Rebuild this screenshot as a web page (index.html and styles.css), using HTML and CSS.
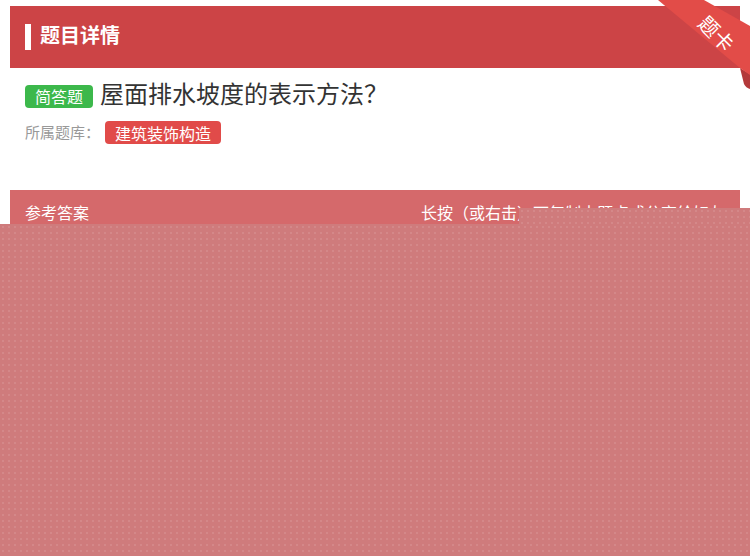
FILE: index.html
```html
<!DOCTYPE html>
<html lang="zh">
<head>
<meta charset="utf-8">
<link rel="stylesheet" href="styles.css">
</head>
<body>
<div class="page">
  <div class="card">
    <div class="head">
      <span class="head-bar"></span>
      <span class="head-title">题目详情</span>
    </div>
    <div class="q-row">
      <span class="badge badge-green">简答题</span>
      <span class="q-text">屋面排水坡度的表示方法？</span>
    </div>
    <div class="bank-row">
      <span class="bank-label">所属题库：</span>
      <span class="badge badge-red">建筑装饰构造</span>
    </div>
    <div class="answer-bar">
      <span>参考答案</span>
      <span>长按（或右击）可复制本题点或分享给好友</span>
    </div>
  </div>

  <svg class="ribbon" viewBox="0 0 92 90" width="92" height="90">
    <path d="M82,68 L92,74 L92,89 Q88,88 86,84 Q84,76 82,68 Z" fill="#b3393a"/>
    <path d="M0,0 L46,0 L92,26 L92,75 L82,68 Z" fill="#e24c48"/>
    <text x="59" y="33" class="ribbon-text" transform="rotate(45 59 33)" text-anchor="middle" dominant-baseline="central">题卡</text>
  </svg>

  <div class="mask mask-top"></div>
  <div class="mask mask-main"></div>
</div>
</body>
</html>
```
FILE: styles.css
```css
html, body {
  margin: 0;
  padding: 0;
  background: #ffffff;
  font-family: "Noto Sans CJK SC", "Noto Sans", sans-serif;
}
.page {
  position: relative;
  width: 750px;
  height: 556px;
  overflow: hidden;
}
.card {
  margin: 6px 10px 0;
}
.head {
  height: 62px;
  background: #cc4446;
  display: flex;
  align-items: center;
  padding-left: 15px;
}
.head-bar {
  width: 6px;
  height: 26px;
  background: #ffffff;
  margin-right: 9px;
}
.head-title {
  color: #ffffff;
  font-size: 20px;
  font-weight: 700;
  line-height: 1;
  margin-bottom: 5px;
}
.q-row {
  margin-top: 12px;
  height: 32px;
  display: flex;
  align-items: center;
  padding-left: 15px;
}
.badge {
  display: inline-flex;
  align-items: center;
  height: 23px;
  padding: 0 10px;
  border-radius: 4px;
  color: #ffffff;
  font-size: 16px;
  line-height: 1;
}
.badge-green {
  background: #3cb84b;
}
.badge-red {
  background: #e14b49;
}
.q-text {
  margin-left: 7px;
  margin-bottom: 6px;
  font-size: 24px;
  color: #333333;
  line-height: 1;
}
.bank-row {
  margin-top: 9px;
  height: 23px;
  display: flex;
  align-items: center;
  padding-left: 15px;
}
.bank-label {
  font-size: 15px;
  color: #999999;
  margin-right: 5px;
  margin-bottom: 3px;
}
.answer-bar {
  margin-top: 46px;
  height: 44px;
  background: #d5696b;
  display: flex;
  align-items: center;
  justify-content: space-between;
  padding: 0 15px 2px;
  color: #ffffff;
  font-size: 16px;
}
.ribbon {
  position: absolute;
  top: 0;
  left: 658px;
}
.ribbon-text {
  fill: #ffffff;
  font-size: 20px;
  font-family: "Noto Sans CJK SC", sans-serif;
}
.mask {
  position: absolute;
  background-color: #cf7b7c;
  background-image: radial-gradient(rgba(255, 255, 255, 0.1) 0.8px, transparent 1px);
  background-size: 6px 6px;
}
.mask-top {
  left: 519px;
  top: 208px;
  width: 231px;
  height: 16px;
}
.mask-main {
  left: 0;
  top: 224px;
  width: 750px;
  height: 332px;
}
```
